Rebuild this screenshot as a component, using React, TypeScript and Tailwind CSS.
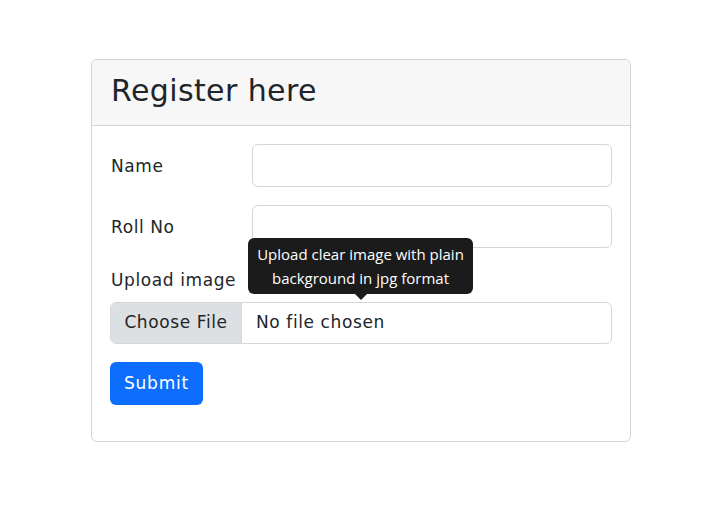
import React from 'react';

const font = { fontFamily: '"DejaVu Sans", "Open Sans", sans-serif' };
const tipFont = { fontFamily: '"Open Sans", "Noto Sans", sans-serif' };

const App = () => {
  return (
    <div className="min-h-screen bg-white pt-[59px] text-[#212529]" style={font}>
      <div className="ml-[91px] w-[540px] rounded-md border border-[#d4d4d4]">
        <div className="h-[66px] bg-[#f7f7f7] border-b border-[#d4d4d4] rounded-t-md px-[19px] pb-[4px] flex items-center">
          <h1 className="text-[30px] leading-none tracking-[0.4px]">Register here</h1>
        </div>

        <form className="px-[18px] pt-[18px] pb-[36px] text-[17px] tracking-[0.6px]">
          <div className="flex items-center mb-[18px]">
            <label className="w-[142px] pl-px pt-[2px]">Name</label>
            <input className="flex-1 h-[43px] rounded-md border border-[#d3d7dc] px-3 outline-none" />
          </div>

          <div className="flex items-center mb-[20px]">
            <label className="w-[142px] pl-px pt-[2px]">Roll No</label>
            <input className="flex-1 h-[43px] rounded-md border border-[#d3d7dc] px-3 outline-none" />
          </div>

          <label className="block pl-px leading-6 mb-[10px]">Upload image</label>

          <div className="relative mb-[18px]">
            <div className="flex h-[42px] rounded-md border border-[#d3d7dc] overflow-hidden">
              <span className="w-[131px] bg-[#dde0e3] border-r border-[#d3d7dc] flex items-center justify-center">
                Choose File
              </span>
              <span className="flex items-center pl-[14px]">No file chosen</span>
            </div>

            <div className="absolute left-[138px] bottom-[calc(100%+2px)] w-[225px] tracking-normal" style={tipFont}>
              <div className="rounded-md bg-[#1b1b1b] px-1 py-[4px] text-center text-[15px] leading-6 text-white">
                Upload clear image with plain background in jpg format
              </div>
              <div className="mx-auto h-0 w-0 border-x-[6px] border-t-[6px] border-x-transparent border-t-[#1b1b1b]" />
            </div>
          </div>

          <button
            type="button"
            className="h-[43px] w-[93px] rounded-md bg-[#0d6efd] text-white text-[17px] tracking-[0.8px]"
          >
            Submit
          </button>
        </form>
      </div>
    </div>
  );
};

export default App;
